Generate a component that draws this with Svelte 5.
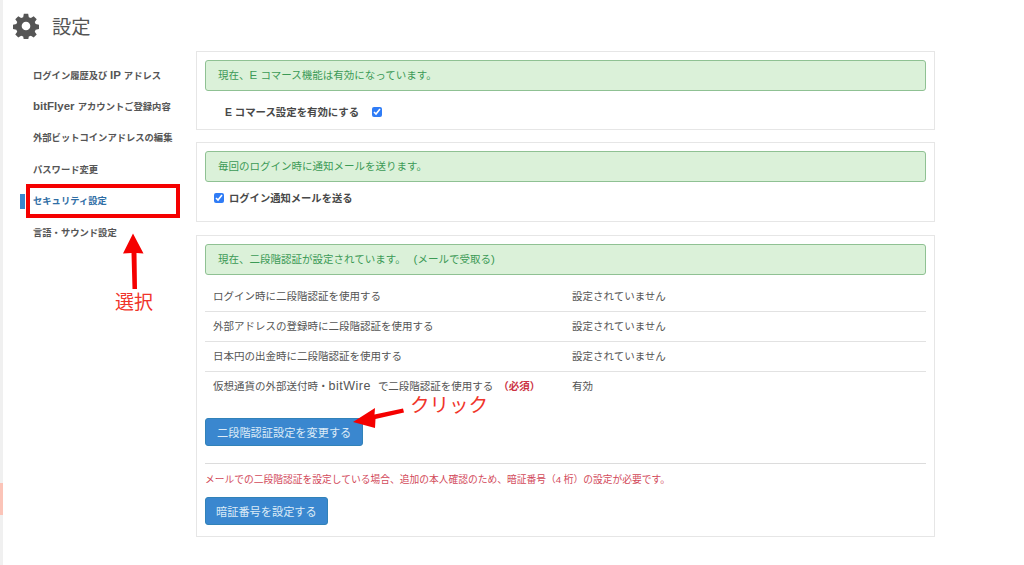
<script lang="ts">
  const menu = [
    { label: 'ログイン履歴及び IP アドレス' },
    { label: 'bitFlyer アカウントご登録内容' },
    { label: '外部ビットコインアドレスの編集' },
    { label: 'パスワード変更' },
    { label: 'セキュリティ設定', active: true },
    { label: '言語・サウンド設定' },
  ];

  const rows = [
    { name: 'ログイン時に二段階認証を使用する', value: '設定されていません' },
    { name: '外部アドレスの登録時に二段階認証を使用する', value: '設定されていません' },
    { name: '日本円の出金時に二段階認証を使用する', value: '設定されていません' },
    { name: '仮想通貨の外部送付時・bitWire で二段階認証を使用する', required: true, value: '有効' },
  ];

  // latin letters sit larger than kana in the original font, so they get their own run
  const runs = (text: string) => text.split(/([A-Za-z()]+ ?)/).filter(Boolean);
  const isLatin = (part: string) => /^[A-Za-z()]/.test(part);
</script>

{#snippet mixed(text: string)}
  {#each runs(text) as part}{#if isLatin(part)}<span class="lat">{part}</span>{:else}{part}{/if}{/each}
{/snippet}

<div class="page">
  <header class="title">
    <svg class="gear" viewBox="0 0 24 24" width="26" height="26" aria-hidden="true">
      <path fill="#555" fill-rule="evenodd" d="M10 0.8h4l.6 3.1 1.9.8 2.6-1.8 2.8 2.8-1.8 2.6.8 1.9 3.1.6v4l-3.1.6-.8 1.9 1.8 2.6-2.8 2.8-2.6-1.8-1.9.8-.6 3.1h-4l-.6-3.1-1.9-.8-2.6 1.8-2.8-2.8 1.8-2.6-.8-1.9-3.1-.6v-4l3.1-.6.8-1.9-1.8-2.6 2.8-2.8 2.6 1.8 1.9-.8zM12 8a4 4 0 1 0 0 8 4 4 0 0 0 0-8z" />
    </svg>
    <h1>設定</h1>
  </header>

  <div class="body">
    <nav class="side">
      {#each menu as item}
        <div class="item" class:active={item.active}>{@render mixed(item.label)}</div>
      {/each}
    </nav>

    <main class="main">
      <section class="panel first">
        <div class="notice">{@render mixed('現在、E コマース機能は有効になっています。')}</div>
        <div class="ec-row">
          <span class="strong">E コマース設定を有効にする</span>
          <input type="checkbox" checked />
        </div>
      </section>

      <section class="panel second">
        <div class="notice">毎回のログイン時に通知メールを送ります。</div>
        <label class="mail-row strong">
          <input type="checkbox" checked />
          ログイン通知メールを送る
        </label>
      </section>

      <section class="panel third">
        <div class="notice">{@render mixed('現在、二段階認証が設定されています。 (メールで受取る)')}</div>
        <div class="table">
          {#each rows as row}
            <div class="row">
              <div class="name">
                {@render mixed(row.name)}
                {#if row.required}<b class="must">（必須）</b>{/if}
              </div>
              <div>{row.value}</div>
            </div>
          {/each}
        </div>
        <button class="btn wide" type="button">二段階認証設定を変更する</button>
        <hr />
        <p class="warn">メールでの二段階認証を設定している場合、追加の本人確認のため、暗証番号（4 桁）の設定が必要です。</p>
        <button class="btn" type="button">暗証番号を設定する</button>
      </section>
    </main>
  </div>

  <!-- annotations drawn over the screenshot -->
  <div class="mark-box"></div>
  <svg class="arrows" width="1024" height="565" aria-hidden="true">
    <path fill="#f50000" d="M133 233.500 L143.500 253.500 L136.500 253 L137 289 L132.500 289 L131.500 253 L123 253.500 Z" />
    <path fill="#f50000" d="M353 422 L375 408 L374.500 414.500 L403 408.500 L404 412.500 L375.500 419 L375 428 Z" />
  </svg>
  <span class="note note-select">選択</span>
  <span class="note note-click">クリック</span>

  <div class="edge"></div>
  <div class="edge-tab"></div>
</div>

<style>
  :global(body) {
    margin: 0;
    background: #fff;
  }

  .page {
    position: relative;
    width: 1024px;
    height: 565px;
    overflow: hidden;
    box-sizing: border-box;
    padding: 11px 0 0 13px;
    font-family: "Liberation Sans", "Noto Sans CJK JP", sans-serif;
    font-size: 10.5px;
    color: #555;
  }

  .title {
    display: flex;
    align-items: center;
    gap: 13px;
    height: 29px;
  }

  .gear {
    display: block;
  }

  h1 {
    margin: 0;
    font-size: 19.3px;
    font-weight: 400;
    color: #555;
  }

  .body {
    display: flex;
    margin-top: 11px;
  }

  .side {
    width: 183px;
    flex: none;
    padding: 8.5px 0 0 20px;
    box-sizing: border-box;
  }

  .item {
    position: relative;
    height: 31.7px;
    line-height: 31.7px;
    font-weight: 700;
    font-size: 9.3px;
    color: #555;
    white-space: nowrap;
  }

  .item .lat {
    font-size: 11.5px;
  }

  .item.active {
    color: #2f6ea5;
  }

  .item.active::before {
    content: '';
    position: absolute;
    left: -13px;
    top: 8px;
    width: 5px;
    height: 15px;
    background: #3a87cf;
  }

  .main {
    width: 739px;
    flex: none;
  }

  .panel {
    border: 1px solid #e6e6e6;
    box-sizing: border-box;
    padding: 8px 8px 0;
  }

  .first { height: 79px; margin-bottom: 12px; }
  .second { height: 80px; margin-bottom: 13px; }
  .third { height: 302px; }

  .notice {
    height: 31px;
    line-height: 28px;
    box-sizing: border-box;
    padding: 0 12px;
    background: #dbf1d9;
    border: 1px solid #8fc193;
    border-radius: 3px;
    color: #3c9a56;
    font-size: 10.5px;
  }

  .notice .lat {
    font-size: 11.5px;
  }

  .third .notice {
    margin-bottom: 7px;
    word-spacing: 5px;
  }

  .strong {
    font-weight: 700;
    color: #484848;
    font-size: 10.3px;
  }

  input[type="checkbox"] {
    width: 10px;
    height: 10px;
    margin: 0;
    accent-color: #2f7cf6;
  }

  .ec-row {
    display: flex;
    align-items: center;
    gap: 13px;
    padding: 12px 0 0 20px;
    height: 17px;
  }

  .ec-row .strong {
    font-size: 10.4px;
  }

  .mail-row {
    display: flex;
    align-items: center;
    gap: 5px;
    padding: 7px 0 0 9px;
    height: 17px;
  }

  .row {
    display: flex;
    height: 30px;
    line-height: 29px;
    box-sizing: border-box;
    padding-left: 8px;
    border-bottom: 1px solid #e2e2e2;
  }

  .row:last-child {
    border-bottom: 0;
  }

  .name {
    width: 359px;
    flex: none;
    white-space: nowrap;
  }

  .name .lat {
    font-size: 12.5px;
    letter-spacing: 0.5px;
    margin-right: 3px;
  }

  .must {
    margin-left: 2px;
    color: #cc3344;
  }

  .btn {
    display: block;
    height: 28px;
    padding: 0 10px;
    background: #3a87cf;
    border: 1px solid #3182b8;
    border-radius: 3px;
    color: #dcebf7;
    font-family: inherit;
    font-size: 11.2px;
  }

  .btn.wide {
    margin-top: 16px;
    padding: 0 11px;
  }

  hr {
    margin: 17px 0 0;
    border: 0;
    border-top: 1px solid #dcdcdc;
  }

  .warn {
    margin: 9px 0 0;
    line-height: 14px;
    font-size: 9.75px;
    color: #d2495a;
    white-space: nowrap;
  }

  .warn + .btn {
    margin-top: 10px;
  }

  .mark-box {
    position: absolute;
    left: 26px;
    top: 184px;
    width: 154px;
    height: 34px;
    box-sizing: border-box;
    border: 4px solid #f50000;
  }

  .arrows {
    position: absolute;
    left: 0;
    top: 0;
  }

  .note {
    position: absolute;
    color: #f0342a;
    line-height: 20px;
    white-space: nowrap;
  }

  .note-select {
    left: 115px;
    top: 293px;
    font-size: 19px;
  }

  .note-click {
    left: 410px;
    top: 395px;
    font-size: 19.5px;
  }

  .edge {
    position: absolute;
    left: 0;
    top: 0;
    width: 3px;
    height: 100%;
    background: #f0f0f0;
  }

  .edge-tab {
    position: absolute;
    left: 0;
    top: 483px;
    width: 3px;
    height: 32px;
    background: #fbc4b8;
  }
</style>
